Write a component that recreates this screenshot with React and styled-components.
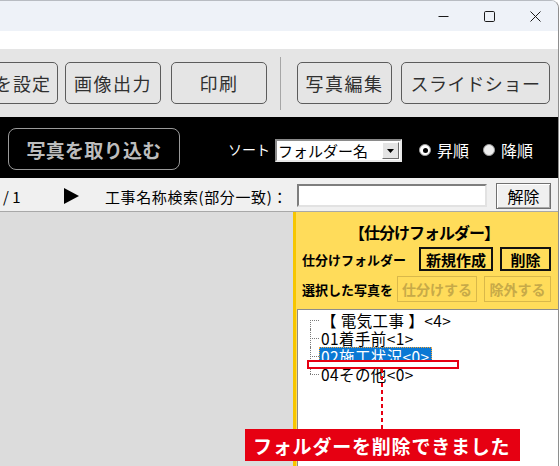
import React from "react";
import styled, { createGlobalStyle } from "styled-components";

const GlobalStyle = createGlobalStyle`
  html, body { margin: 0; padding: 0; background: #ffffff; }
  body { font-family: "Noto Sans CJK JP", "Noto Sans", sans-serif; }
  * { box-sizing: border-box; }
`;

const Screen = styled.div`
  width: 560px;
  height: 466px;
  overflow: hidden;
  background: #ffffff;
`;

const Window = styled.div`
  width: 559px;
  height: 466px;
  border-top: 1px solid #b8bcc2;
  border-right: 1px solid #8e8e8e;
  border-top-right-radius: 8px;
  overflow: hidden;
  display: flex;
  flex-direction: column;
  position: relative;
`;

const TitleBar = styled.div`
  height: 30px;
  background: #eef2f8;
  display: flex;
  justify-content: flex-end;
  align-items: stretch;
  flex-shrink: 0;
`;

const WinCtl = styled.div`
  width: 46px;
  display: flex;
  align-items: center;
  justify-content: center;
  color: #1a1a1a;
`;

const WhiteStrip = styled.div`
  height: 18px;
  background: #ffffff;
  flex-shrink: 0;
`;

const Toolbar = styled.div`
  height: 68px;
  background: #e5e5e5;
  display: flex;
  align-items: center;
  flex-shrink: 0;
`;

const ToolBtn = styled.div`
  width: ${(p) => p.$w}px;
  margin-left: ${(p) => p.$ml || 0}px;
  height: 42px;
  border: 1px solid #5c5c5c;
  border-radius: 5px;
  background: #e5e5e5;
  display: flex;
  align-items: center;
  justify-content: ${(p) => (p.$end ? "flex-end" : "center")};
  padding-right: ${(p) => (p.$end ? 6 : 0)}px;
  font-size: 18px;
  letter-spacing: ${(p) => p.$ls ?? 1.5}px;
  color: #303030;
  flex-shrink: 0;
  white-space: nowrap;
  overflow: hidden;
`;

const ToolSep = styled.div`
  width: 1px;
  height: 53px;
  background: #a6a6a6;
  margin-left: 13px;
  flex-shrink: 0;
`;

const BlackBar = styled.div`
  height: 61px;
  background: #000000;
  display: flex;
  align-items: center;
  padding: 3px 0 0 8px;
  flex-shrink: 0;
`;

const ImportBtn = styled.div`
  width: 172px;
  height: 42px;
  border: 1.5px solid #9a9a9a;
  border-radius: 8px;
  display: flex;
  align-items: center;
  justify-content: center;
  color: #bdbdbd;
  font-size: 19px;
  font-weight: 700;
  letter-spacing: 0.3px;
  flex-shrink: 0;
`;

const SortLabel = styled.span`
  color: #ffffff;
  font-size: 14px;
  margin-left: 48px;
  width: 47px;
  flex-shrink: 0;
`;

const Select = styled.div`
  width: 127px;
  height: 23px;
  margin-top: 3px;
  background: #ffffff;
  border: 2px solid;
  border-color: #8a8a8a #e8e8e8 #e8e8e8 #8a8a8a;
  display: flex;
  align-items: center;
  justify-content: space-between;
  padding: 0 1px 0 1px;
  font-size: 15px;
  color: #000;
  flex-shrink: 0;
`;

const SelectArrow = styled.div`
  width: 17px;
  height: 17px;
  background: #e4e4e4;
  border: 1px solid;
  border-color: #ffffff #6e6e6e #6e6e6e #ffffff;
  display: flex;
  align-items: center;
  justify-content: center;
`;

const Radio = styled.span`
  width: 12px;
  height: 12px;
  border-radius: 50%;
  background: ${(p) => (p.$on ? "#ffffff" : "#eeeeee")};
  border: 1px solid #9c9c9c;
  margin-left: ${(p) => p.$ml}px;
  margin-top: 2px;
  display: flex;
  align-items: center;
  justify-content: center;
  flex-shrink: 0;
  &::after {
    content: "";
    width: 5px;
    height: 5px;
    border-radius: 50%;
    background: ${(p) => (p.$on ? "#000" : "transparent")};
  }
`;

const RadioLabel = styled.span`
  color: #ffffff;
  font-size: 16px;
  margin-left: 6px;
  margin-top: 2px;
`;

const SearchRow = styled.div`
  height: 34px;
  background: #f0f0f0;
  border-bottom: 1px solid #a8a8a8;
  display: flex;
  align-items: center;
  flex-shrink: 0;
  font-size: 15px;
  color: #000;
`;

const PageText = styled.span`
  margin-left: 3px;
  width: 61px;
  margin-top: 3px;
`;

const PlayMark = styled.span`
  width: 41px;
  display: flex;
  align-items: center;
  margin-top: 2px;
`;

const SearchLabel = styled.span`
  width: 192px;
  letter-spacing: 0.6px;
  margin-top: 3px;
  white-space: nowrap;
`;

const SearchInput = styled.div`
  width: 190px;
  height: 23px;
  background: #ffffff;
  border: 2px solid;
  border-color: #7e7e7e #e2e2e2 #e2e2e2 #7e7e7e;
  margin-top: 1px;
`;

const ClearBtn = styled.div`
  width: 55px;
  height: 26px;
  margin-left: 9px;
  margin-top: 2px;
  border: 1px solid #707070;
  box-shadow: inset 1px 1px #ffffff, inset -1px -1px #a8a8a8;
  background: #f0f0f0;
  display: flex;
  align-items: center;
  justify-content: center;
  font-size: 16px;
`;

const Main = styled.div`
  flex: 1;
  display: flex;
  position: relative;
  min-height: 0;
`;

const LeftPane = styled.div`
  width: 293px;
  background: #dcdcdc;
  flex-shrink: 0;
`;

const RightPane = styled.div`
  flex: 1;
  display: flex;
  flex-direction: column;
  border-left: 3px solid #f7c600;
  background: #ffdc5a;
`;

const SortPanel = styled.div`
  height: 97px;
  padding: 10px 0 0 6px;
  display: flex;
  flex-direction: column;
  flex-shrink: 0;
`;

const PanelTitle = styled.div`
  height: 20px;
  line-height: 20px;
  text-align: center;
  font-size: 16px;
  font-weight: 700;
  letter-spacing: -1px;
  color: #000;
  padding-right: 12px;
`;

const PanelRow = styled.div`
  display: flex;
  align-items: center;
  margin-top: 5px;
  height: ${(p) => p.$h}px;
`;

const PanelLabel = styled.span`
  width: ${(p) => p.$w}px;
  font-size: 13px;
  font-weight: 700;
  color: #000;
  white-space: nowrap;
  flex-shrink: 0;
`;

const PanelBtn = styled.div`
  width: ${(p) => p.$w}px;
  height: ${(p) => (p.$disabled ? 26 : 24)}px;
  margin-left: ${(p) => p.$ml || 0}px;
  border: ${(p) => (p.$disabled ? "1px solid #d9b84a" : "2px solid #111")};
  color: ${(p) => (p.$disabled ? "#c7aa48" : "#000")};
  font-size: ${(p) => (p.$disabled ? 14 : 15)}px;
  font-weight: 700;
  display: flex;
  align-items: center;
  justify-content: center;
  flex-shrink: 0;
  white-space: nowrap;
`;

const TreeBox = styled.div`
  flex: 1;
  margin-left: 1px;
  background: #ffffff;
  border-top: 1px solid #8c8c8c;
  border-left: 1px solid #8c8c8c;
  padding: 1px 0 0 12px;
`;

const TreeRow = styled.div`
  height: 18px;
  display: flex;
  align-items: center;
`;

const Connector = styled.span`
  position: relative;
  width: 9px;
  height: 18px;
  flex-shrink: 0;
  &::before {
    content: "";
    position: absolute;
    left: 0;
    top: ${(p) => (p.$first ? 9 : 0)}px;
    height: ${(p) => (p.$first || p.$last ? 9 : 18)}px;
    border-left: 1px dotted #7a7a7a;
  }
  &::after {
    content: "";
    position: absolute;
    left: 0;
    top: 9px;
    width: 9px;
    border-top: 1px dotted #7a7a7a;
  }
`;

const TreeLabel = styled.span`
  display: inline-block;
  font-size: 15.5px;
  letter-spacing: 0.4px;
  line-height: 18px;
  height: 18px;
  padding: 0 2px;
  color: ${(p) => (p.$sel ? "#ffffff" : "#000")};
  background: ${(p) => (p.$sel ? "#0a78d4" : "transparent")};
  outline: ${(p) => (p.$sel ? "1px dotted #f2a53a" : "none")};
  outline-offset: -1px;
  white-space: nowrap;
`;

const RedBox = styled.div`
  position: absolute;
  left: 307px;
  top: 148px;
  width: 152px;
  height: 9px;
  background: #ffffff;
  border: 2px solid #e60012;
`;

const DashLine = styled.div`
  position: absolute;
  left: 381px;
  top: 157px;
  width: 2px;
  height: 60px;
  background: repeating-linear-gradient(to bottom, #e60012 0 4px, transparent 4px 7px);
`;

const Banner = styled.div`
  position: absolute;
  left: 245px;
  top: 217px;
  width: 275px;
  height: 32px;
  background: #e60012;
  color: #ffffff;
  font-size: 19px;
  font-weight: 700;
  letter-spacing: 0.8px;
  display: flex;
  align-items: center;
  padding-left: 8px;
  white-space: nowrap;
`;

const treeItems = [
  { text: "【 電気工事 】<4>", first: true },
  { text: "01着手前<1>" },
  { text: "02施工状況<0>", sel: true },
  { text: "04その他<0>", last: true },
];

export default function App() {
  return (
    <>
      <GlobalStyle />
      <Screen>
        <Window>
          <TitleBar>
            <WinCtl>
              <svg width="11" height="11" viewBox="0 0 11 11">
                <line x1="0.5" y1="5.5" x2="10.5" y2="5.5" stroke="#1a1a1a" strokeWidth="1" />
              </svg>
            </WinCtl>
            <WinCtl>
              <svg width="11" height="11" viewBox="0 0 11 11">
                <rect x="0.5" y="0.5" width="10" height="10" rx="1.2" fill="none" stroke="#1a1a1a" strokeWidth="1" />
              </svg>
            </WinCtl>
            <WinCtl>
              <svg width="11" height="11" viewBox="0 0 11 11">
                <path d="M0.5 0.5 L10.5 10.5 M10.5 0.5 L0.5 10.5" stroke="#1a1a1a" strokeWidth="1" />
              </svg>
            </WinCtl>
          </TitleBar>
          <WhiteStrip />
          <Toolbar>
            <ToolBtn $w={80} $ml={-22} $end $ls={1}>を設定</ToolBtn>
            <ToolBtn $w={96} $ml={7}>画像出力</ToolBtn>
            <ToolBtn $w={96} $ml={10}>印刷</ToolBtn>
            <ToolSep />
            <ToolBtn $w={95} $ml={16}>写真編集</ToolBtn>
            <ToolBtn $w={149} $ml={9} $ls={0.6}>スライドショー</ToolBtn>
          </Toolbar>
          <BlackBar>
            <ImportBtn>写真を取り込む</ImportBtn>
            <SortLabel>ソート</SortLabel>
            <Select>
              <span>フォルダー名</span>
              <SelectArrow>
                <svg width="7" height="4" viewBox="0 0 7 4">
                  <path d="M0 0 H7 L3.5 4 Z" fill="#000" />
                </svg>
              </SelectArrow>
            </Select>
            <Radio $on $ml={17} />
            <RadioLabel>昇順</RadioLabel>
            <Radio $ml={14} />
            <RadioLabel>降順</RadioLabel>
          </BlackBar>
          <SearchRow>
            <PageText>/ 1</PageText>
            <PlayMark>
              <svg width="15" height="16" viewBox="0 0 15 16">
                <path d="M0 0 L15 8 L0 16 Z" fill="#000" />
              </svg>
            </PlayMark>
            <SearchLabel>工事名称検索(部分一致)：</SearchLabel>
            <SearchInput />
            <ClearBtn>解除</ClearBtn>
          </SearchRow>
          <Main>
            <LeftPane />
            <RightPane>
              <SortPanel>
                <PanelTitle>【仕分けフォルダー】</PanelTitle>
                <PanelRow $h={24}>
                  <PanelLabel $w={117}>仕分けフォルダー</PanelLabel>
                  <PanelBtn $w={74}>新規作成</PanelBtn>
                  <PanelBtn $w={51} $ml={7}>削除</PanelBtn>
                </PanelRow>
                <PanelRow $h={26}>
                  <PanelLabel $w={95}>選択した写真を</PanelLabel>
                  <PanelBtn $w={80} $disabled>仕分けする</PanelBtn>
                  <PanelBtn $w={67} $ml={7} $disabled>除外する</PanelBtn>
                </PanelRow>
              </SortPanel>
              <TreeBox>
                {treeItems.map((it) => (
                  <TreeRow key={it.text}>
                    <Connector $first={it.first} $last={it.last} />
                    <TreeLabel $sel={it.sel}>{it.text}</TreeLabel>
                  </TreeRow>
                ))}
              </TreeBox>
            </RightPane>
            <RedBox />
            <DashLine />
            <Banner>フォルダーを削除できました</Banner>
          </Main>
        </Window>
      </Screen>
    </>
  );
}
